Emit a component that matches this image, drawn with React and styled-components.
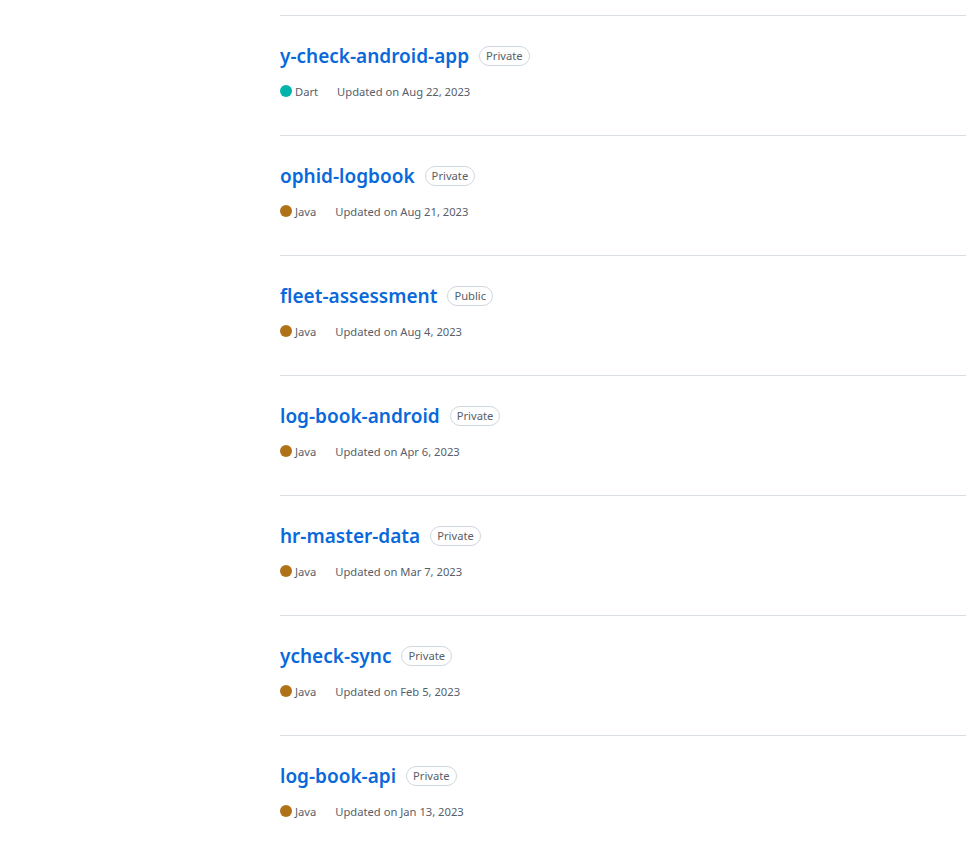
import styled, { createGlobalStyle } from 'styled-components';

const repos = [
  { name: 'y-check-android-app', visibility: 'Private', lang: 'Dart', color: '#00b4ab', updated: 'Aug 22, 2023' },
  { name: 'ophid-logbook', visibility: 'Private', lang: 'Java', color: '#b07219', updated: 'Aug 21, 2023' },
  { name: 'fleet-assessment', visibility: 'Public', lang: 'Java', color: '#b07219', updated: 'Aug 4, 2023' },
  { name: 'log-book-android', visibility: 'Private', lang: 'Java', color: '#b07219', updated: 'Apr 6, 2023' },
  { name: 'hr-master-data', visibility: 'Private', lang: 'Java', color: '#b07219', updated: 'Mar 7, 2023' },
  { name: 'ycheck-sync', visibility: 'Private', lang: 'Java', color: '#b07219', updated: 'Feb 5, 2023' },
  { name: 'log-book-api', visibility: 'Private', lang: 'Java', color: '#b07219', updated: 'Jan 13, 2023' },
];

export default function App() {
  return (
    <>
      <Global />
      <List>
        {repos.map((repo) => (
          <Item key={repo.name}>
            <Title>
              <RepoLink href="#">{repo.name}</RepoLink>
              <Badge>{repo.visibility}</Badge>
            </Title>
            <Meta>
              <Lang>
                <Dot $color={repo.color} />
                {repo.lang}
              </Lang>
              <span>Updated on {repo.updated}</span>
            </Meta>
          </Item>
        ))}
      </List>
    </>
  );
}

const Global = createGlobalStyle`
  body {
    margin: 0;
    background: #ffffff;
    font-family: "Noto Sans", "Open Sans", sans-serif;
    overflow: hidden;
  }
`;

const List = styled.ul`
  list-style: none;
  margin: 0;
  padding: 15px 0 0 280px;
`;

const Item = styled.li`
  border-top: 1px solid #d8dee4;
  padding: 24px 0 35px;
`;

const Title = styled.h3`
  margin: 0;
  height: 32px;
  display: flex;
  align-items: center;
  font-size: 19px;
  font-weight: 600;
`;

const RepoLink = styled.a`
  color: #0969da;
  text-decoration: none;
`;

const Badge = styled.span`
  margin-left: 10px;
  padding: 0 6px;
  height: 18px;
  line-height: 18px;
  border: 1px solid #d0d7de;
  border-radius: 2em;
  font-size: 11.2px;
  font-weight: 400;
  color: #57606a;
`;

const Meta = styled.div`
  margin-top: 10px;
  display: flex;
  align-items: center;
  height: 18px;
  font-size: 11.2px;
  color: #57606a;
`;

const Lang = styled.span`
  display: inline-flex;
  align-items: center;
  margin-right: 19px;
`;

const Dot = styled.span`
  width: 12px;
  height: 12px;
  border-radius: 50%;
  background: ${(p) => p.$color};
  margin-right: 3px;
`;
